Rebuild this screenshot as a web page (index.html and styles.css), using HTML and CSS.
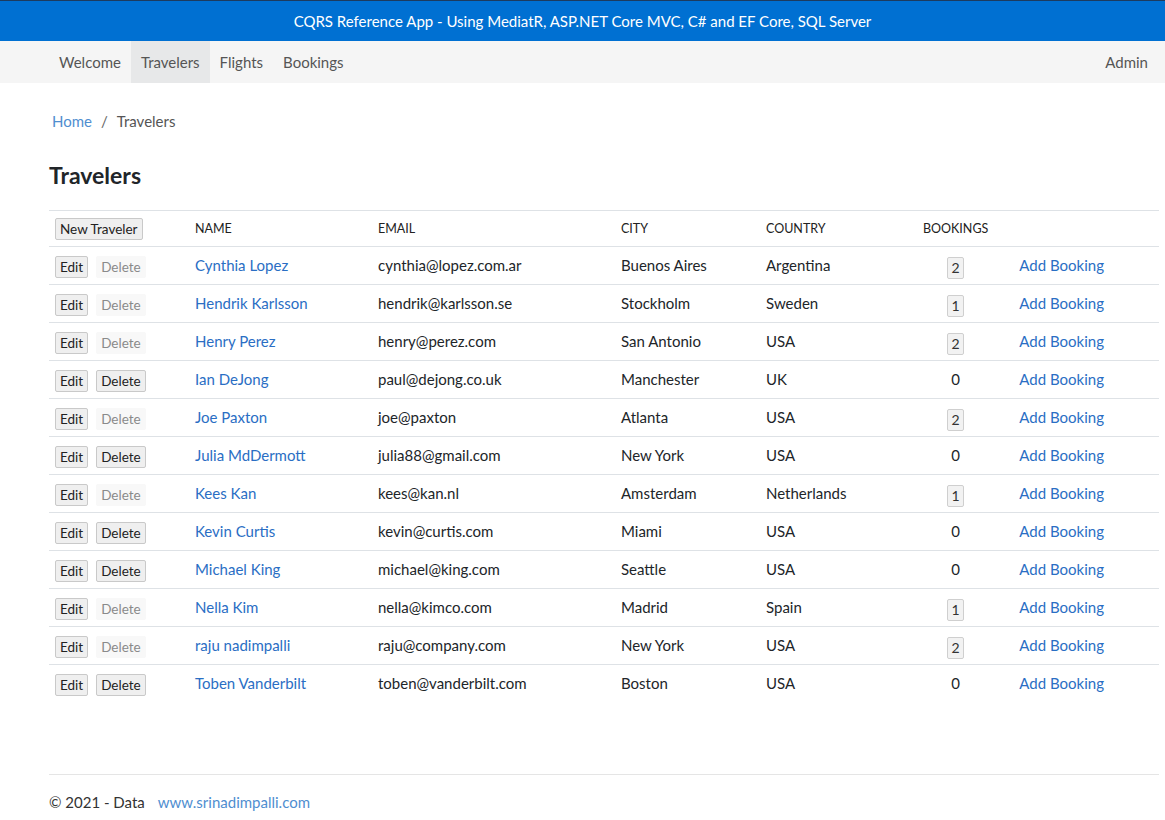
FILE: index.html
```html
<!DOCTYPE html>
<html lang="en">
<head>
<meta charset="utf-8">
<title>Travelers</title>
<link rel="stylesheet" href="styles.css">
</head>
<body>
<header class="topbar">CQRS Reference App - Using MediatR, ASP.NET Core MVC, C# and EF Core, SQL Server</header>
<nav class="menu">
  <div class="menu-left">
    <a class="menu-item" href="#">Welcome</a>
    <a class="menu-item active" href="#">Travelers</a>
    <a class="menu-item" href="#">Flights</a>
    <a class="menu-item" href="#">Bookings</a>
  </div>
  <a class="menu-item" href="#">Admin</a>
</nav>
<main class="content">
  <div class="breadcrumb"><a href="#">Home</a><span class="sep">/</span><span>Travelers</span></div>
  <h1 class="title">Travelers</h1>
  <table class="grid">
    <thead>
      <tr>
        <th class="c-actions"><button class="btn">New Traveler</button></th>
        <th class="c-name">NAME</th>
        <th class="c-email">EMAIL</th>
        <th class="c-city">CITY</th>
        <th class="c-country">COUNTRY</th>
        <th class="c-count">BOOKINGS</th>
        <th class="c-add"></th>
      </tr>
    </thead>
    <tbody>
      <tr><td class="c-actions"><button class="btn">Edit</button><button class="btn" disabled>Delete</button></td><td><a href="#">Cynthia Lopez</a></td><td>cynthia@lopez.com.ar</td><td>Buenos Aires</td><td>Argentina</td><td class="c-count"><span class="badge">2</span></td><td><a href="#">Add Booking</a></td></tr>
      <tr><td class="c-actions"><button class="btn">Edit</button><button class="btn" disabled>Delete</button></td><td><a href="#">Hendrik Karlsson</a></td><td>hendrik@karlsson.se</td><td>Stockholm</td><td>Sweden</td><td class="c-count"><span class="badge">1</span></td><td><a href="#">Add Booking</a></td></tr>
      <tr><td class="c-actions"><button class="btn">Edit</button><button class="btn" disabled>Delete</button></td><td><a href="#">Henry Perez</a></td><td>henry@perez.com</td><td>San Antonio</td><td>USA</td><td class="c-count"><span class="badge">2</span></td><td><a href="#">Add Booking</a></td></tr>
      <tr><td class="c-actions"><button class="btn">Edit</button><button class="btn">Delete</button></td><td><a href="#">Ian DeJong</a></td><td>paul@dejong.co.uk</td><td>Manchester</td><td>UK</td><td class="c-count">0</td><td><a href="#">Add Booking</a></td></tr>
      <tr><td class="c-actions"><button class="btn">Edit</button><button class="btn" disabled>Delete</button></td><td><a href="#">Joe Paxton</a></td><td>joe@paxton</td><td>Atlanta</td><td>USA</td><td class="c-count"><span class="badge">2</span></td><td><a href="#">Add Booking</a></td></tr>
      <tr><td class="c-actions"><button class="btn">Edit</button><button class="btn">Delete</button></td><td><a href="#">Julia MdDermott</a></td><td>julia88@gmail.com</td><td>New York</td><td>USA</td><td class="c-count">0</td><td><a href="#">Add Booking</a></td></tr>
      <tr><td class="c-actions"><button class="btn">Edit</button><button class="btn" disabled>Delete</button></td><td><a href="#">Kees Kan</a></td><td>kees@kan.nl</td><td>Amsterdam</td><td>Netherlands</td><td class="c-count"><span class="badge">1</span></td><td><a href="#">Add Booking</a></td></tr>
      <tr><td class="c-actions"><button class="btn">Edit</button><button class="btn">Delete</button></td><td><a href="#">Kevin Curtis</a></td><td>kevin@curtis.com</td><td>Miami</td><td>USA</td><td class="c-count">0</td><td><a href="#">Add Booking</a></td></tr>
      <tr><td class="c-actions"><button class="btn">Edit</button><button class="btn">Delete</button></td><td><a href="#">Michael King</a></td><td>michael@king.com</td><td>Seattle</td><td>USA</td><td class="c-count">0</td><td><a href="#">Add Booking</a></td></tr>
      <tr><td class="c-actions"><button class="btn">Edit</button><button class="btn" disabled>Delete</button></td><td><a href="#">Nella Kim</a></td><td>nella@kimco.com</td><td>Madrid</td><td>Spain</td><td class="c-count"><span class="badge">1</span></td><td><a href="#">Add Booking</a></td></tr>
      <tr><td class="c-actions"><button class="btn">Edit</button><button class="btn" disabled>Delete</button></td><td><a href="#">raju nadimpalli</a></td><td>raju@company.com</td><td>New York</td><td>USA</td><td class="c-count"><span class="badge">2</span></td><td><a href="#">Add Booking</a></td></tr>
      <tr><td class="c-actions"><button class="btn">Edit</button><button class="btn">Delete</button></td><td><a href="#">Toben Vanderbilt</a></td><td>toben@vanderbilt.com</td><td>Boston</td><td>USA</td><td class="c-count">0</td><td><a href="#">Add Booking</a></td></tr>
    </tbody>
  </table>
</main>
<footer class="footer">
  <span>© 2021 - Data</span><a href="#">www.srinadimpalli.com</a>
</footer>
</body>
</html>
```
FILE: styles.css
```css
* { box-sizing: border-box; }
html, body { margin: 0; padding: 0; }
body {
  font-family: Lato, "Open Sans", sans-serif;
  font-size: 15px;
  color: #212529;
  background: #fff;
}
a { color: #2a6ec4; text-decoration: none; }

.topbar {
  height: 41px;
  background: #0070d2;
  border-top: 1px solid #1d3b5e;
  color: #fff;
  font-size: 15px;
  display: flex;
  align-items: center;
  justify-content: center;
}

.menu {
  height: 42px;
  background: #f5f5f5;
  display: flex;
  justify-content: space-between;
  align-items: stretch;
  padding: 0 7px 0 49px;
}
.menu-left { display: flex; }
.menu-item {
  display: flex;
  align-items: center;
  padding: 0 10px;
  color: #555;
  font-size: 15px;
}
.menu-item.active { background: #e7e8e9; }

.content { padding: 0 6px 0 49px; }

.breadcrumb {
  padding: 29px 0 0 3px;
  height: 50px;
  color: #555;
  font-size: 15px;
}
.breadcrumb a { color: #4f8ed0; }
.breadcrumb .sep { margin: 0 9px; color: #666; }

.title {
  margin: 0;
  padding-top: 28px;
  font-size: 23px;
  font-weight: 700;
  color: #212529;
  height: 77px;
}

.grid {
  width: 100%;
  border-collapse: collapse;
  border-top: 1px solid #dee2e6;
}
.grid th {
  text-align: left;
  font-weight: 400;
  font-size: 12.5px;
  color: #222;
  height: 36px;
  padding: 0 6px;
  border-bottom: 1px solid #dee2e6;
}
.grid td {
  height: 38px;
  padding: 8px 6px 0;
  line-height: 20px;
  border-bottom: 1px solid #dee2e6;
  vertical-align: top;
}
.grid tbody tr:last-child td { border-bottom: none; }

.c-actions { width: 140px; white-space: nowrap; }
.c-name { width: 183px; }
.c-email { width: 243px; }
.c-city { width: 145px; }
.c-country { width: 157px; }
.grid .c-count { width: 95px; padding-right: 25px; text-align: center; }

.btn {
  font-family: inherit;
  font-size: 13.5px;
  color: #222;
  background: #efefef;
  border: 1px solid #c9c9c9;
  border-radius: 2px;
  height: 22px;
  padding: 0 4px;
  margin: 0 8px 0 0;
  vertical-align: middle;
  line-height: 20px;
}
.grid td .btn { vertical-align: top; margin-top: 1px; }
.btn:disabled {
  color: #8a8a8a;
  background: #f8f8f8;
  border-color: #f8f8f8;
}

.badge {
  display: inline-block;
  vertical-align: top;
  min-width: 17px;
  height: 22px;
  line-height: 20px;
  font-size: 14px;
  border: 1px solid #cfcfcf;
  background: #f2f2f2;
  border-radius: 2px;
  margin-top: 2px;
  text-align: center;
  color: #333;
}

.footer {
  margin: 71px 6px 0 49px;
  border-top: 1px solid #e5e5e5;
  padding-top: 18px;
  font-size: 15px;
  color: #333;
}
.footer a { color: #4f8ed0; margin-left: 13px; }
```
